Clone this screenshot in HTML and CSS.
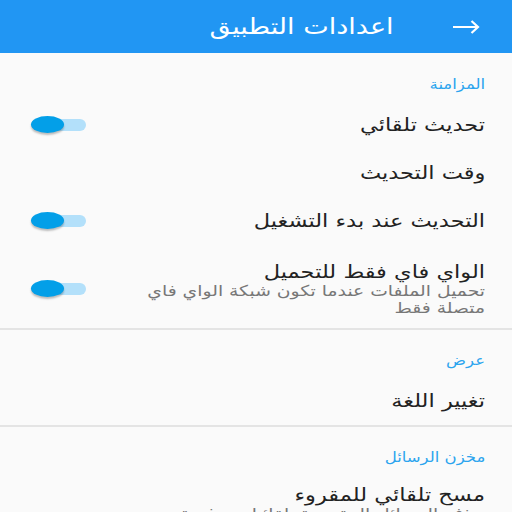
FILE: index.html
```html
<!DOCTYPE html>
<html lang="ar" dir="rtl">
<head>
    <meta charset="UTF-8">
    <title>اعدادات التطبيق</title>
    <link rel="stylesheet" href="styles.css">
</head>
<body>

<div class="toolbar">
    <svg class="back" width="28" height="14" viewBox="0 0 28 14">
        <path d="M1 7 H26 M19.5 1 L26 7 L19.5 13" fill="none" stroke="#fff" stroke-width="2.2"/>
    </svg>
    <div class="toolbar-title">اعدادات التطبيق</div>
</div>

<div class="settings">
    <!-- المزامنة -->
    <div class="category">المزامنة</div>
    <div class="pref">
        <div class="pref-title">تحديث تلقائي</div>
        <div class="switch"><span class="track"></span><span class="thumb"></span></div>
    </div>
    <div class="pref">
        <div class="pref-title">وقت التحديث</div>
    </div>
    <div class="pref">
        <div class="pref-title">التحديث عند بدء التشغيل</div>
        <div class="switch"><span class="track"></span><span class="thumb"></span></div>
    </div>
    <div class="pref two-line">
        <div class="pref-text">
            <div class="pref-title">الواي فاي فقط للتحميل</div>
            <div class="pref-summary">تحميل الملفات عندما تكون شبكة الواي فاي متصلة فقط</div>
        </div>
        <div class="switch"><span class="track"></span><span class="thumb"></span></div>
    </div>
    <div class="divider"></div>

    <!-- عرض -->
    <div class="category">عرض</div>
    <div class="pref">
        <div class="pref-title">تغيير اللغة</div>
    </div>
    <div class="divider"></div>

    <!-- مخزن الرسائل -->
    <div class="category">مخزن الرسائل</div>
    <div class="pref two-line last">
        <div class="pref-text">
            <div class="pref-title">مسح تلقائي للمقروء</div>
            <div class="pref-summary">حذف الرسائل المقروءة تلقائيا بعد فترة من الأيام</div>
        </div>
    </div>
</div>

</body>
</html>
```
FILE: styles.css
```css
body {
    margin: 0;
    background-color: #fafafa;
    font-family: "DejaVu Sans", sans-serif;
    overflow: hidden;
}
.toolbar {
    height: 53px;
    background-color: #2196f3;
    display: flex;
    align-items: center;
    padding-right: 32px;
    color: #fff;
}
.back {
    display: block;
}
.toolbar-title {
    margin-right: 58px;
    font-size: 22px;
    transform: scaleX(1.23);
    transform-origin: right center;
}
.settings {
    padding-right: 27px;
}
.category {
    width: fit-content;
    padding-top: 15px;
    padding-bottom: 2px;
    line-height: 30px;
    font-size: 14px;
    color: #2ba4ee;
    transform: scaleX(1.18);
    transform-origin: right center;
}
.category:first-child {
    padding-top: 16px;
}
.pref {
    height: 48px;
    display: flex;
    align-items: center;
}
.pref.two-line {
    height: auto;
    padding: 16px 0 11px;
}
.pref.last {
    padding-top: 10px;
}
.pref-text {
    width: 290px;
}
/* النص في الصورة ممدود أفقيا */
.pref-title,
.pref-summary {
    transform: scaleX(1.25);
    transform-origin: right center;
}
.pref-title {
    font-size: 18px;
    line-height: 22px;
    color: #222;
}
.pref-summary {
    font-size: 15px;
    line-height: 17px;
    color: #777;
}
.switch {
    position: relative;
    width: 55px;
    height: 18px;
    margin-right: auto;
    margin-left: 31px;
}
.track {
    position: absolute;
    left: 6px;
    right: 0;
    top: 3px;
    height: 12px;
    border-radius: 6px;
    background-color: #b3e0fa;
}
.thumb {
    position: absolute;
    left: 0;
    top: 0;
    width: 33px;
    height: 17px;
    border-radius: 50%;
    background-color: #039fe8;
    box-shadow: 0 2px 2px rgba(0, 0, 0, 0.25);
}
.divider {
    height: 2px;
    background-color: #e4e4e4;
    margin-right: -27px;
}
```
